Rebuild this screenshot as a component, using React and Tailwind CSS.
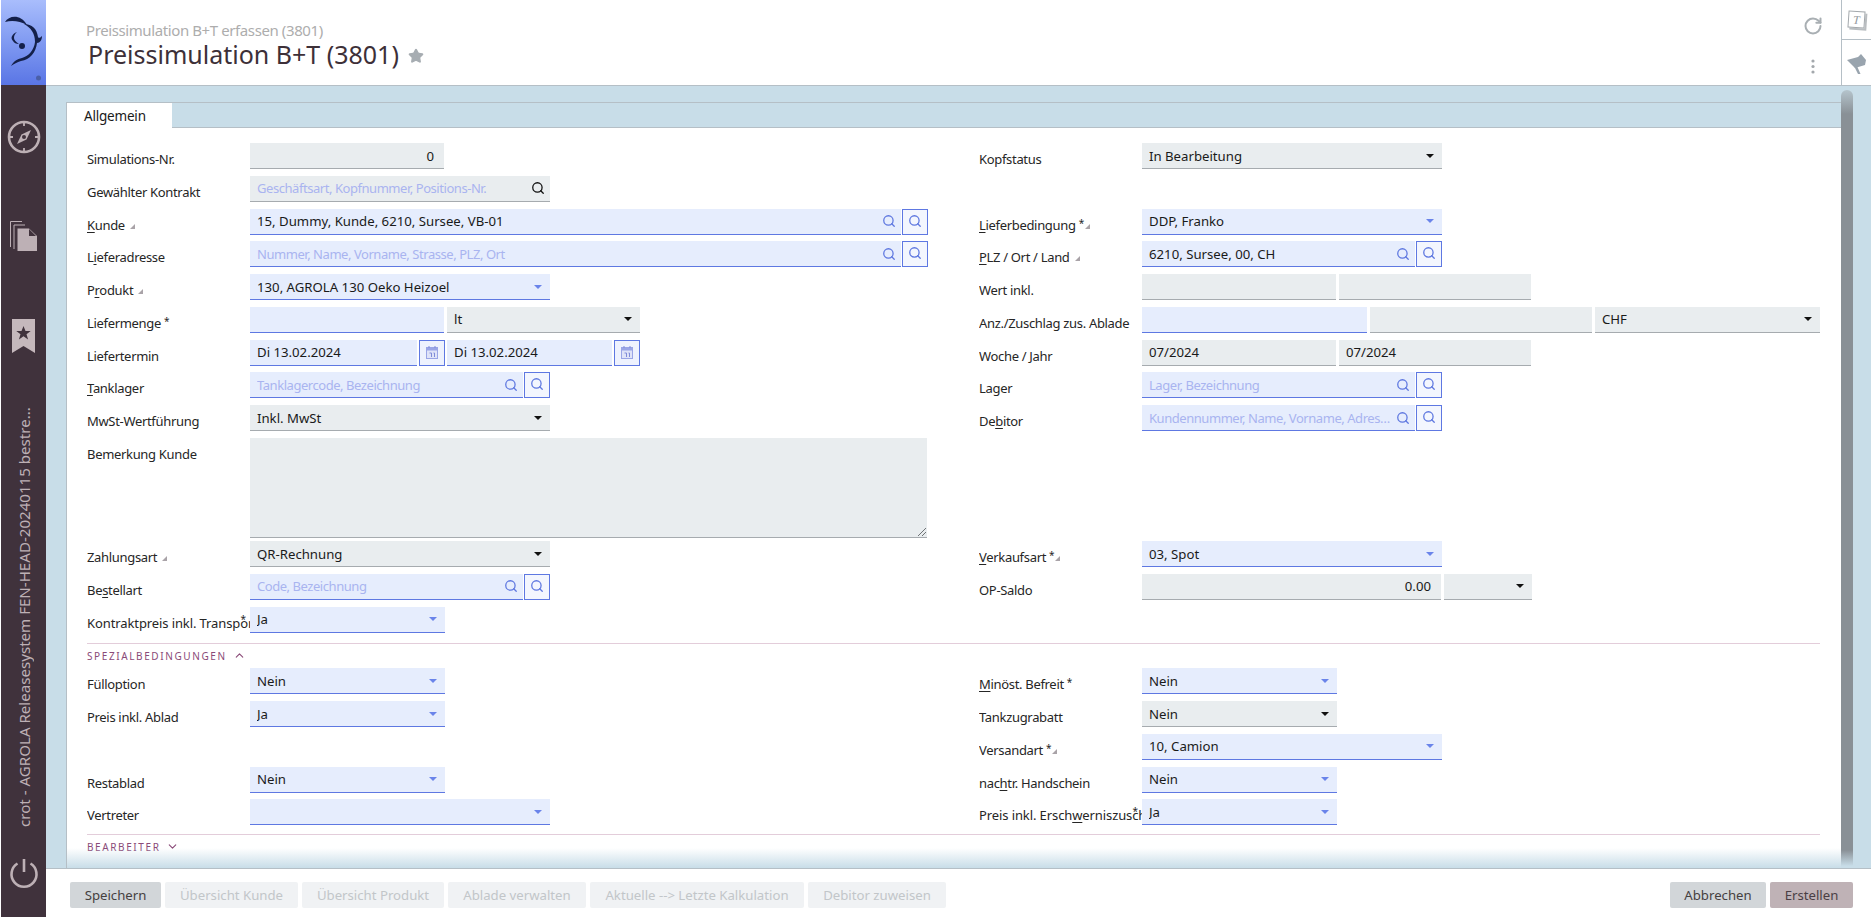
import { RotateCw, Search, Star, ChevronUp, ChevronDown } from 'lucide-react';

function Caret({ dark }) {
    return (
        <svg width="8" height="4" viewBox="0 0 8 4" className="shrink-0">
            <path d="M0 0h8L4 4z" fill={dark ? '#111111' : '#6a84ea'} />
        </svg>
    );
}

function SearchIcon({ color = '#5f78e0' }) {
    return <Search size={14} strokeWidth={2.2} color={color} className="shrink-0" />;
}

function Field({ w, grey, value, placeholder, right, select, search, blackSearch }) {
    return (
        <div className={`${w} h-[26px] shrink-0 flex items-center pl-[7px] ${search ? 'pr-[5px]' : 'pr-[8px]'} border-b-[1.5px] ${grey ? 'bg-[#e9edef] border-[#a6abaf]' : 'bg-[#e6edfd] border-[#5e78e2]'}`}>
            <span className={`flex-1 min-w-0 truncate ${right ? 'text-right pr-[2px]' : ''} ${value ? 'text-[#1a1a1a]' : 'text-[#a9b4f0] text-[13px] tracking-[-0.45px]'}`}>
                {value || placeholder}
            </span>
            {select && <Caret dark={grey} />}
            {search && <span className="ml-[3px]"><SearchIcon color={blackSearch ? '#111111' : '#5f78e0'} /></span>}
        </div>
    );
}

function SearchButton() {
    return (
        <div className="w-[26px] h-[26px] ml-px shrink-0 flex items-start justify-center pt-[4px] border border-[#5e78e2] bg-[#f3f6fe]">
            <SearchIcon />
        </div>
    );
}

function CalendarButton() {
    return (
        <div className="w-[26px] h-[26px] ml-[2px] shrink-0 flex items-center justify-center border border-[#5e78e2] bg-[#eef2fe]">
            <svg width="12" height="13" viewBox="0 0 12 13">
                <rect x="0.5" y="1.5" width="11" height="11" fill="#dfe3f8" stroke="#9aa5e6" />
                <rect x="0.5" y="1.5" width="11" height="3" fill="#9aa5e6" />
                <path d="M3 0v2M9 0v2" stroke="#7f8bd8" />
                <path d="M3.5 7h2v4M7.5 7h1v4" fill="none" stroke="#7f8bd8" />
            </svg>
        </div>
    );
}

function Marker({ tight }) {
    return (
        <svg width="5" height="5" viewBox="0 0 5 5" className={`${tight ? 'ml-[1px]' : 'ml-[5px]'} mt-[8px] shrink-0`}>
            <path d="M5 0v5H0z" fill="#a9a3a8" />
        </svg>
    );
}

function Label({ children, marker, star, clipStar }) {
    return (
        <div className={`relative w-[163px] shrink-0 pt-[7px] h-[26px] flex items-start text-[13px] ${clipStar ? 'tracking-[-0.1px]' : 'tracking-[-0.32px]'} text-[#262626] whitespace-nowrap overflow-hidden`}>
            <span>{children}</span>
            {star && <span className="ml-[3px] text-[10px] leading-[14px]">*</span>}
            {marker && <Marker tight={star} />}
            {clipStar && <span className="absolute right-[4px] top-[5px] text-[10px] leading-[14px]">*</span>}
        </div>
    );
}

function Row({ label, marker, star, clipStar, children }) {
    return (
        <div className="h-[32.75px] flex items-start">
            <Label marker={marker} star={star} clipStar={clipStar}>{label}</Label>
            <div className="flex items-start">{children}</div>
        </div>
    );
}

function Key({ children }) {
    return <span className="underline underline-offset-2">{children}</span>;
}

function ActionButton({ w, tone = 'off', children }) {
    const tones = {
        off: 'bg-[#f0f2f4] text-[#c2c6c9]',
        on: 'bg-[#d2d6d9] text-[#45403f]',
        main: 'bg-[#bfb2b6] text-[#4a3f45]',
    };
    return (
        <div className={`${w} h-[26px] rounded-[2px] flex items-center justify-center shrink-0 ${tones[tone]}`}>
            {children}
        </div>
    );
}

function SectionHead({ title, open }) {
    return (
        <div className="border-t border-[#e3cdda] h-[25px] flex items-center gap-[6px] pb-[1px] text-[#8a4a78] text-[10px] tracking-[1.6px]">
            <span>{title}</span>
            {open ? <ChevronUp size={13} strokeWidth={2} /> : <ChevronDown size={13} strokeWidth={2} />}
        </div>
    );
}

function Sidebar() {
    return (
        <div className="w-[45px] ml-px shrink-0 flex flex-col items-center bg-[#40323c] text-[#bdb0b5]">
            <div className="w-full h-[85px] shrink-0 bg-gradient-to-b from-[#a9bdfc] to-[#5a75e5]">
                <svg width="45" height="85" viewBox="1 0 45 85">
                    <g fill="#14204a">
                        <path d="M5 22C9 15 21 14 27 25C20 21 12 20 5 22Z" />
                        <path d="M24 24C32 24 37 29 38 37C39 39 41 37 42 36C42 40 40 43 37 43C36 52 30 60 21 61C17 62 14 64 11 66C14 61 17 59 22 58C29 56 34 50 35 42C35 33 31 28 24 24Z" />
                        <path d="M17 32C12 34 10 38 13 41C14 43 16 44 19 44C16 42 14 40 14 38C14 35 15 34 17 32Z" />
                        <circle cx="22" cy="46" r="3" />
                    </g>
                    <circle cx="38.5" cy="78" r="2.5" fill="#4a5fa8" />
                </svg>
            </div>
            <svg width="34" height="34" viewBox="0 0 34 34" className="mt-[35px] shrink-0">
                <circle cx="17" cy="17" r="15" fill="none" stroke="#bdb0b5" strokeWidth="2.600" />
                <path d="M17 2v4M17 28v4M2 17h4M28 17h4" stroke="#bdb0b5" strokeWidth="1.800" />
                <path d="M24 10L19.500 19.500L10 24L14.500 14.500Z" fill="#bdb0b5" />
                <circle cx="17" cy="17" r="2" fill="#40323c" />
            </svg>
            <svg width="28" height="30" viewBox="0 0 28 30" className="mt-[67px] shrink-0">
                <path d="M0.5 26V0.5H12" fill="none" stroke="#bdb0b5" />
                <path d="M4 28V4H15" fill="none" stroke="#bdb0b5" />
                <path d="M7.5 30V7.500H19L27 15V30Z" fill="#bdb0b5" />
                <path d="M19 8V15H26Z" fill="#40323c" />
            </svg>
            <svg width="23" height="34" viewBox="0 0 23 34" className="mt-[68px] shrink-0">
                <path d="M0 0H23V34L11.500 27L0 34Z" fill="#c5b8bc" />
                <path d="M11.500 7l2 5h5.200l-4.200 3.200 1.600 5.200-4.600-3.200-4.600 3.200 1.600-5.200-4.200-3.200h5.200z" fill="#40323c" />
            </svg>
            <div className="mt-[20px] mb-[31px] flex-1 min-h-0 [writing-mode:vertical-rl] rotate-180 text-[15.100px] whitespace-nowrap flex items-center justify-start pr-[1px]">
                crot - AGROLA Releasesystem FEN-HEAD-20240115 bestre...
            </div>
            <svg width="30" height="30" viewBox="0 0 30 30" className="mb-[29px] shrink-0">
                <path d="M8.500 5.500A12.500 12.500 0 1 0 21.500 5.500" fill="none" stroke="#bdb0b5" strokeWidth="2.600" />
                <path d="M15 1V14" stroke="#bdb0b5" strokeWidth="2.600" />
            </svg>
        </div>
    );
}

function Header() {
    return (
        <div className="h-[86px] shrink-0 flex bg-white border-b border-[#b5bfc6]">
            <div className="flex-1 pl-[40px] pt-[20px]">
                <div className="text-[15px] tracking-[-0.4px] leading-[20px] text-[#adadad]">Preissimulation B+T erfassen (3801)</div>
                <div className="flex items-center mt-[-2px] pl-[2px]">
                    <span className="text-[25px] leading-[32px] text-[#3d3038]">Preissimulation B+T (3801)</span>
                    <Star size={16} fill="#a7adb2" color="#a7adb2" className="ml-[9px] mt-[4px]" />
                </div>
            </div>
            <div className="w-[46px] flex flex-col items-center justify-between pt-[16px] pb-[11px] pr-[11px]">
                <RotateCw size={20} strokeWidth={2.4} color="#a9afb3" />
                <svg width="4" height="15" viewBox="0 0 4 15">
                    <circle cx="2" cy="2" r="1.600" fill="#a3a8ac" />
                    <circle cx="2" cy="7.500" r="1.600" fill="#a3a8ac" />
                    <circle cx="2" cy="13" r="1.600" fill="#a3a8ac" />
                </svg>
            </div>
            <div className="w-[30px] flex flex-col border-l border-[#b5bfc6]">
                <div className="h-[40px] flex items-center justify-center border-b border-[#b5bfc6]">
                    <div className="w-[17px] h-[17px] rotate-[4deg] border border-[#a3a8ac] shadow-[2px_2px_0_#b9bdc0] bg-white flex items-center justify-center font-['Liberation_Serif',serif] italic text-[12px] text-[#8f959a]">T</div>
                </div>
                <div className="flex-1 flex items-center justify-center pt-[3px]">
                    <svg width="19" height="21" viewBox="0 0 19 21">
                        <path d="M0 6L11 3L14 0L19 6L18 11L8 14L0 6Z" fill="#99a4ae" />
                        <path d="M7 12L11 20L13.500 20L10 12Z" fill="#99a4ae" />
                    </svg>
                </div>
            </div>
        </div>
    );
}

function FormPanel() {
    return (
        <div className="relative flex-1 min-w-0 flex flex-col bg-white border-l border-t border-[#b5bfc6] overflow-hidden">
            <div className="h-[25px] shrink-0 flex bg-[#c8dde8]">
                <div className="w-[105px] bg-white pl-[17px] pt-[4px] text-[#1a1a1a] text-[13.500px] tracking-[-0.2px]">Allgemein</div>
                <div className="flex-1 border-b border-[#b5bfc6]" />
            </div>
            <div className="pt-[15px] pl-[20px] pr-[21px]">
                <div className="flex">
                    <div className="w-[892px] shrink-0">
                        <Row label="Simulations-Nr."><Field w="w-[194px]" grey value="0" right /></Row>
                        <Row label="Gewählter Kontrakt"><Field w="w-[300px]" grey placeholder="Geschäftsart, Kopfnummer, Positions-Nr." search blackSearch /></Row>
                        <Row label={<><Key>K</Key>unde</>} marker><Field w="w-[651px]" value="15, Dummy, Kunde, 6210, Sursee, VB-01" search /><SearchButton /></Row>
                        <Row label={<>L<Key>i</Key>eferadresse</>}><Field w="w-[651px]" placeholder="Nummer, Name, Vorname, Strasse, PLZ, Ort" search /><SearchButton /></Row>
                        <Row label={<>P<Key>r</Key>odukt</>} marker><Field w="w-[300px]" value="130, AGROLA 130 Oeko Heizoel" select /></Row>
                        <Row label="Liefermenge" star>
                            <Field w="w-[194px]" />
                            <div className="ml-[3px]"><Field w="w-[193px]" grey value="lt" select /></div>
                        </Row>
                        <Row label="Liefertermin">
                            <Field w="w-[167px]" value="Di 13.02.2024" />
                            <CalendarButton />
                            <div className="ml-[2px]"><Field w="w-[165px]" value="Di 13.02.2024" /></div>
                            <CalendarButton />
                        </Row>
                        <Row label={<><Key>T</Key>anklager</>}><Field w="w-[273px]" placeholder="Tanklagercode, Bezeichnung" search /><SearchButton /></Row>
                        <Row label="MwSt-Wertführung"><Field w="w-[300px]" grey value="Inkl. MwSt" select /></Row>
                        <div className="h-[103.25px] flex items-start">
                            <Label>Bemerkung Kunde</Label>
                            <div className="relative w-[677px] h-[100px] bg-[#e9edef] border-b-[1.5px] border-[#a6abaf]">
                                <svg width="8" height="8" viewBox="0 0 8 8" className="absolute right-[1px] bottom-[1px]">
                                    <path d="M0 8L8 0M4 8L8 4" stroke="#6f7376" />
                                </svg>
                            </div>
                        </div>
                        <Row label="Zahlungsart" marker><Field w="w-[300px]" grey value="QR-Rechnung" select /></Row>
                        <Row label={<>Be<Key>s</Key>tellart</>}><Field w="w-[273px]" placeholder="Code, Bezeichnung" search /><SearchButton /></Row>
                        <Row label="Kontraktpreis inkl. Transport" clipStar><Field w="w-[195px]" value="Ja" select /></Row>
                    </div>
                    <div className="flex-1 min-w-0">
                        <Row label="Kopfstatus"><Field w="w-[300px]" grey value="In Bearbeitung" select /></Row>
                        <div className="h-[32.75px]" />
                        <Row label={<><Key>L</Key>ieferbedingung</>} star marker><Field w="w-[300px]" value="DDP, Franko" select /></Row>
                        <Row label={<><Key>P</Key>LZ / Ort / Land</>} marker><Field w="w-[273px]" value="6210, Sursee, 00, CH" search /><SearchButton /></Row>
                        <Row label="Wert inkl.">
                            <Field w="w-[194px]" grey />
                            <div className="ml-[3px]"><Field w="w-[192px]" grey /></div>
                        </Row>
                        <Row label="Anz./Zuschlag zus. Ablade">
                            <Field w="w-[225px]" />
                            <div className="ml-[3px]"><Field w="w-[222px]" grey /></div>
                            <div className="ml-[3px]"><Field w="w-[225px]" grey value="CHF" select /></div>
                        </Row>
                        <Row label="Woche / Jahr">
                            <Field w="w-[194px]" grey value="07/2024" />
                            <div className="ml-[3px]"><Field w="w-[192px]" grey value="07/2024" /></div>
                        </Row>
                        <Row label="Lager"><Field w="w-[273px]" placeholder="Lager, Bezeichnung" search /><SearchButton /></Row>
                        <Row label={<>De<Key>b</Key>itor</>}><Field w="w-[273px]" placeholder="Kundennummer, Name, Vorname, Adresse, PLZ, Ort" search /><SearchButton /></Row>
                        <div className="h-[103.25px]" />
                        <Row label={<><Key>V</Key>erkaufsart</>} star marker><Field w="w-[300px]" value="03, Spot" select /></Row>
                        <Row label="OP-Saldo">
                            <Field w="w-[299px]" grey value="0.00" right />
                            <div className="ml-[3px]"><Field w="w-[88px]" grey select value=" " /></div>
                        </Row>
                    </div>
                </div>
                <div className="mt-[4px]">
                    <SectionHead title="SPEZIALBEDINGUNGEN" open />
                </div>
                <div className="flex">
                    <div className="w-[892px] shrink-0">
                        <Row label="Fülloption"><Field w="w-[195px]" value="Nein" select /></Row>
                        <Row label="Preis inkl. Ablad"><Field w="w-[195px]" value="Ja" select /></Row>
                        <div className="h-[32.75px]" />
                        <Row label="Restablad"><Field w="w-[195px]" value="Nein" select /></Row>
                        <Row label="Vertreter"><Field w="w-[300px]" select /></Row>
                    </div>
                    <div className="flex-1 min-w-0">
                        <Row label={<><Key>M</Key>inöst. Befreit</>} star><Field w="w-[195px]" value="Nein" select /></Row>
                        <Row label="Tankzugrabatt"><Field w="w-[195px]" grey value="Nein" select /></Row>
                        <Row label="Versandart" star marker><Field w="w-[300px]" value="10, Camion" select /></Row>
                        <Row label={<>nac<Key>h</Key>tr. Handschein</>}><Field w="w-[195px]" value="Nein" select /></Row>
                        <Row label={<>Preis inkl. Ersch<Key>w</Key>erniszuschlag</>} clipStar><Field w="w-[195px]" value="Ja" select /></Row>
                    </div>
                </div>
                <div className="mt-[2px]">
                    <SectionHead title="BEARBEITER" />
                </div>
            </div>
            {/* fade over the end of the scrolling form */}
            <div className="absolute left-0 right-0 bottom-0 h-[20px] bg-gradient-to-b from-white/0 to-[#c8dde8]" />
        </div>
    );
}

export default function App() {
    return (
        <div className="h-screen w-full flex overflow-hidden bg-white font-['Noto_Sans',sans-serif] text-[13.200px] leading-[18px]">
            <Sidebar />
            <div className="flex-1 min-w-0 flex flex-col">
                <Header />
                <div className="flex-1 min-h-0 flex bg-[#c8dde8] pl-[20px] pt-[16px]">
                    <FormPanel />
                    <div className="w-[12px] mt-[-12px] mb-[2px] mr-[18px] shrink-0 rounded-t-[6px] bg-[linear-gradient(to_bottom,#b5c4cc,#899096_24px,#899096_calc(100%-16px),#c8dde8)]" />
                </div>
                <div className="h-[49px] shrink-0 flex items-start justify-between pl-[24px] pr-[18px] pt-[13px] bg-white border-t border-[#b5bfc6]">
                    <div className="flex gap-[4px]">
                        <ActionButton w="w-[91px]" tone="on">Speichern</ActionButton>
                        <ActionButton w="w-[133px]">Übersicht Kunde</ActionButton>
                        <ActionButton w="w-[142px]">Übersicht Produkt</ActionButton>
                        <ActionButton w="w-[138px]">Ablade verwalten</ActionButton>
                        <ActionButton w="w-[214px]">Aktuelle --&gt; Letzte Kalkulation</ActionButton>
                        <ActionButton w="w-[138px]">Debitor zuweisen</ActionButton>
                    </div>
                    <div className="flex gap-[4px]">
                        <ActionButton w="w-[96px]" tone="on">Abbrechen</ActionButton>
                        <ActionButton w="w-[83px]" tone="main">Erstellen</ActionButton>
                    </div>
                </div>
            </div>
        </div>
    );
}
